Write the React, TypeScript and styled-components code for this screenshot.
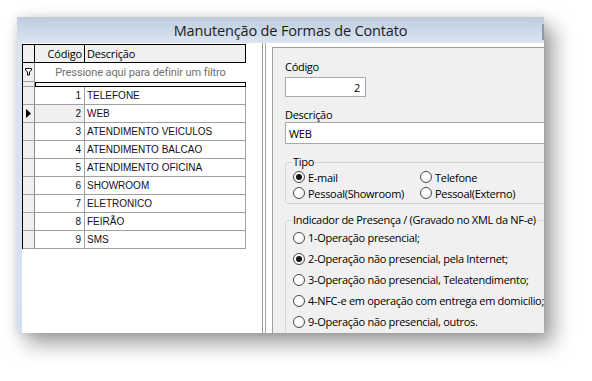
import styled, { createGlobalStyle } from "styled-components";

const GlobalStyle = createGlobalStyle`
  html, body {
    margin: 0;
    padding: 0;
    background: #fff;
  }
  body {
    width: 592px;
    height: 381px;
    overflow: hidden;
  }
`;

const Page = styled.div`
  padding: 17px 0 0 17px;
`;

const Window = styled.div`
  width: 527px;
  height: 316px;
  display: flex;
  flex-direction: column;
  overflow: hidden;
  background: #fff;
  box-shadow: 9px 10px 20px rgba(0, 0, 0, 0.4), 0 0 10px rgba(0, 0, 0, 0.1);
`;

const TitleBar = styled.div`
  height: 26px;
  flex: none;
  display: flex;
  background: linear-gradient(#bdcbdc, #dbe6f3);
`;

const Title = styled.div`
  flex: 1;
  text-align: center;
  padding: 4px 0 0 22px;
  font: 14.5px "Open Sans", sans-serif;
  letter-spacing: -0.15px;
  color: #1c1c1c;
`;

const TitleGrip = styled.div`
  width: 2px;
  height: 16px;
  margin-top: 7px;
  background: #8d9bb0;
`;

const Content = styled.div`
  flex: 1;
  display: flex;
  min-height: 0;
`;

const FrameEdge = styled.div`
  width: 5px;
  flex: none;
  background: linear-gradient(#dbe6f3, #d3e0ef);
`;

const LeftPane = styled.div`
  width: 240px;
  flex: none;
  padding-top: 1px;
  background: #fff;
`;

const Splitter = styled.div`
  width: 10px;
  flex: none;
  box-sizing: border-box;
  border-left: 1px solid #9a9a9a;
  background: linear-gradient(to right, #fff 0 2px, #a4a4a4 2px 3px, #fff 3px);
`;

const RightPane = styled.div`
  flex: 1;
  min-width: 0;
  margin-top: 4px;
  border-top: 1px solid #a0a0a0;
  border-left: 1px solid #a0a0a0;
  background: #f0f0f0;
  padding: 12px 0 0 12px;
  display: flex;
  flex-direction: column;
  overflow: hidden;
  font: 11px "Open Sans", sans-serif;
  letter-spacing: -0.3px;
  color: #000;
`;

/* grid */

const Grid = styled.div`
  width: 224px;
  box-sizing: border-box;
  border-left: 1px solid #000;
  font: 10px "Liberation Sans", Arial, sans-serif;
  color: #101020;
`;

const Row = styled.div<{ $h: number }>`
  display: grid;
  grid-template-columns: 12px 50px 161px;
  height: ${(p) => p.$h}px;
`;

const HeadCell = styled.div<{ $right?: boolean }>`
  box-sizing: border-box;
  background: #f0f0f0;
  border-top: 1px solid #000;
  border-right: 1px solid #000;
  border-bottom: 1px solid #000;
  display: flex;
  align-items: center;
  justify-content: ${(p) => (p.$right ? "flex-end" : "flex-start")};
  padding: 0 2px;
  font: 11px "Open Sans", sans-serif;
  letter-spacing: -0.2px;
  color: #000;
`;

const Indicator = styled.div`
  box-sizing: border-box;
  background: #f0f0f0;
  border-right: 1px solid #8a8a8a;
  border-bottom: 1px solid #a0a0a0;
  display: flex;
  align-items: center;
  justify-content: center;
`;

const FilterCell = styled.div`
  grid-column: span 2;
  display: flex;
  align-items: center;
  justify-content: center;
  font: 11px Roboto, sans-serif;
  letter-spacing: -0.1px;
  color: #707070;
`;

const StripCell = styled.div`
  grid-column: span 2;
  box-sizing: border-box;
  border: 1px solid #000;
  background: #f6f6f6;
`;

const Cell = styled.div<{ $right?: boolean; $shaded?: boolean }>`
  box-sizing: border-box;
  border-right: 1px solid #a0a0a0;
  border-bottom: 1px solid #a0a0a0;
  background: ${(p) => (p.$shaded ? "#f0f0f0" : "#fff")};
  display: flex;
  align-items: center;
  justify-content: ${(p) => (p.$right ? "flex-end" : "flex-start")};
  padding: 0 3px 0 2px;
  white-space: nowrap;
  overflow: hidden;
`;

/* form */

const Label = styled.div<{ $top: number }>`
  margin-top: ${(p) => p.$top}px;
  line-height: 14px;
`;

const TextBox = styled.div<{ $w: number; $h: number; $right?: boolean }>`
  width: ${(p) => p.$w}px;
  height: ${(p) => p.$h}px;
  flex: none;
  box-sizing: border-box;
  border: 1px solid #a9a9a9;
  background: #fff;
  display: flex;
  align-items: center;
  justify-content: ${(p) => (p.$right ? "flex-end" : "flex-start")};
  padding: 0 5px 0 3px;
`;

const Group = styled.fieldset<{ $top: number }>`
  margin: ${(p) => p.$top}px 0 0 0;
  padding: 0 0 2px 7px;
  width: 290px;
  min-width: 0;
  flex: none;
  box-sizing: border-box;
  border: 1px solid #d5d5d5;
  border-radius: 3px;
`;

const Legend = styled.legend`
  padding: 0 1px;
  margin-left: -1px;
  line-height: 14px;
`;

const TipoGrid = styled.div`
  display: grid;
  grid-template-columns: 127px auto;
  grid-auto-rows: 16px;
`;

const RadioList = styled.div`
  display: grid;
  grid-auto-rows: 21px;
`;

const RadioItem = styled.div`
  display: flex;
  align-items: center;
  gap: 3px;
  white-space: nowrap;
`;

const RadioCircle = styled.span<{ $checked?: boolean }>`
  width: 12px;
  height: 12px;
  flex: none;
  box-sizing: border-box;
  border-radius: 50%;
  border: 1px solid #4a4a4a;
  background: radial-gradient(circle at 40% 35%, #fff 40%, #e4e4e4);
  display: flex;
  align-items: center;
  justify-content: center;

  &::after {
    content: "";
    display: ${(p) => (p.$checked ? "block" : "none")};
    width: 6px;
    height: 6px;
    border-radius: 50%;
    background: #151515;
  }
`;

const rows = [
  [1, "TELEFONE"],
  [2, "WEB"],
  [3, "ATENDIMENTO VEICULOS"],
  [4, "ATENDIMENTO BALCAO"],
  [5, "ATENDIMENTO OFICINA"],
  [6, "SHOWROOM"],
  [7, "ELETRONICO"],
  [8, "FEIRÃO"],
  [9, "SMS"],
] as const;

const tipos = [
  { label: "E-mail", checked: true },
  { label: "Telefone" },
  { label: "Pessoal(Showroom)" },
  { label: "Pessoal(Externo)" },
];

const presencas = [
  { label: "1-Operação presencial;" },
  { label: "2-Operação não presencial, pela Internet;", checked: true },
  { label: "3-Operação não presencial, Teleatendimento;" },
  { label: "4-NFC-e em operação com entrega em domicílio;" },
  { label: "9-Operação não presencial, outros." },
];

const FilterIcon = () => (
  <svg width="7" height="8" viewBox="0 0 7 8">
    <path d="M0.5 0.5h6v1.5l-2 2v3h-2v-3l-2-2z" fill="#fff" stroke="#000" strokeWidth="1" />
  </svg>
);

const RowArrow = () => (
  <svg width="5" height="9" viewBox="0 0 5 9">
    <path d="M0 0l5 4.5L0 9z" fill="#000" />
  </svg>
);

const Radio = ({ label, checked }: { label: string; checked?: boolean }) => (
  <RadioItem>
    <RadioCircle $checked={checked} />
    {label}
  </RadioItem>
);

export default function App() {
  return (
    <>
      <GlobalStyle />
      <Page>
        <Window>
          <TitleBar>
            <Title>Manutenção de Formas de Contato</Title>
            <TitleGrip />
          </TitleBar>
          <Content>
            <FrameEdge />
            <LeftPane>
              <Grid>
                <Row $h={19}>
                  <HeadCell />
                  <HeadCell $right>Código</HeadCell>
                  <HeadCell>Descrição</HeadCell>
                </Row>
                <Row $h={19}>
                  <Indicator>
                    <FilterIcon />
                  </Indicator>
                  <FilterCell>Pressione aqui para definir um filtro</FilterCell>
                </Row>
                <Row $h={5}>
                  <Indicator />
                  <StripCell />
                </Row>
                {rows.map(([code, desc]) => (
                  <Row $h={18} key={code}>
                    <Indicator>{code === 2 && <RowArrow />}</Indicator>
                    <Cell $right $shaded={code === 2}>
                      {code}
                    </Cell>
                    <Cell>{desc}</Cell>
                  </Row>
                ))}
              </Grid>
            </LeftPane>
            <Splitter />
            <RightPane>
              <Label $top={0}>Código</Label>
              <TextBox $w={81} $h={20} $right style={{ marginTop: 3 }}>
                2
              </TextBox>
              <Label $top={11}>Descrição</Label>
              <TextBox $w={290} $h={22}>
                WEB
              </TextBox>
              <Group $top={11}>
                <Legend>Tipo</Legend>
                <TipoGrid>
                  {tipos.map((t) => (
                    <Radio key={t.label} label={t.label} checked={t.checked} />
                  ))}
                </TipoGrid>
              </Group>
              <Group $top={9}>
                <Legend>Indicador de Presença / (Gravado no XML da NF-e)</Legend>
                <RadioList>
                  {presencas.map((p) => (
                    <Radio key={p.label} label={p.label} checked={p.checked} />
                  ))}
                </RadioList>
              </Group>
            </RightPane>
          </Content>
        </Window>
      </Page>
    </>
  );
}
